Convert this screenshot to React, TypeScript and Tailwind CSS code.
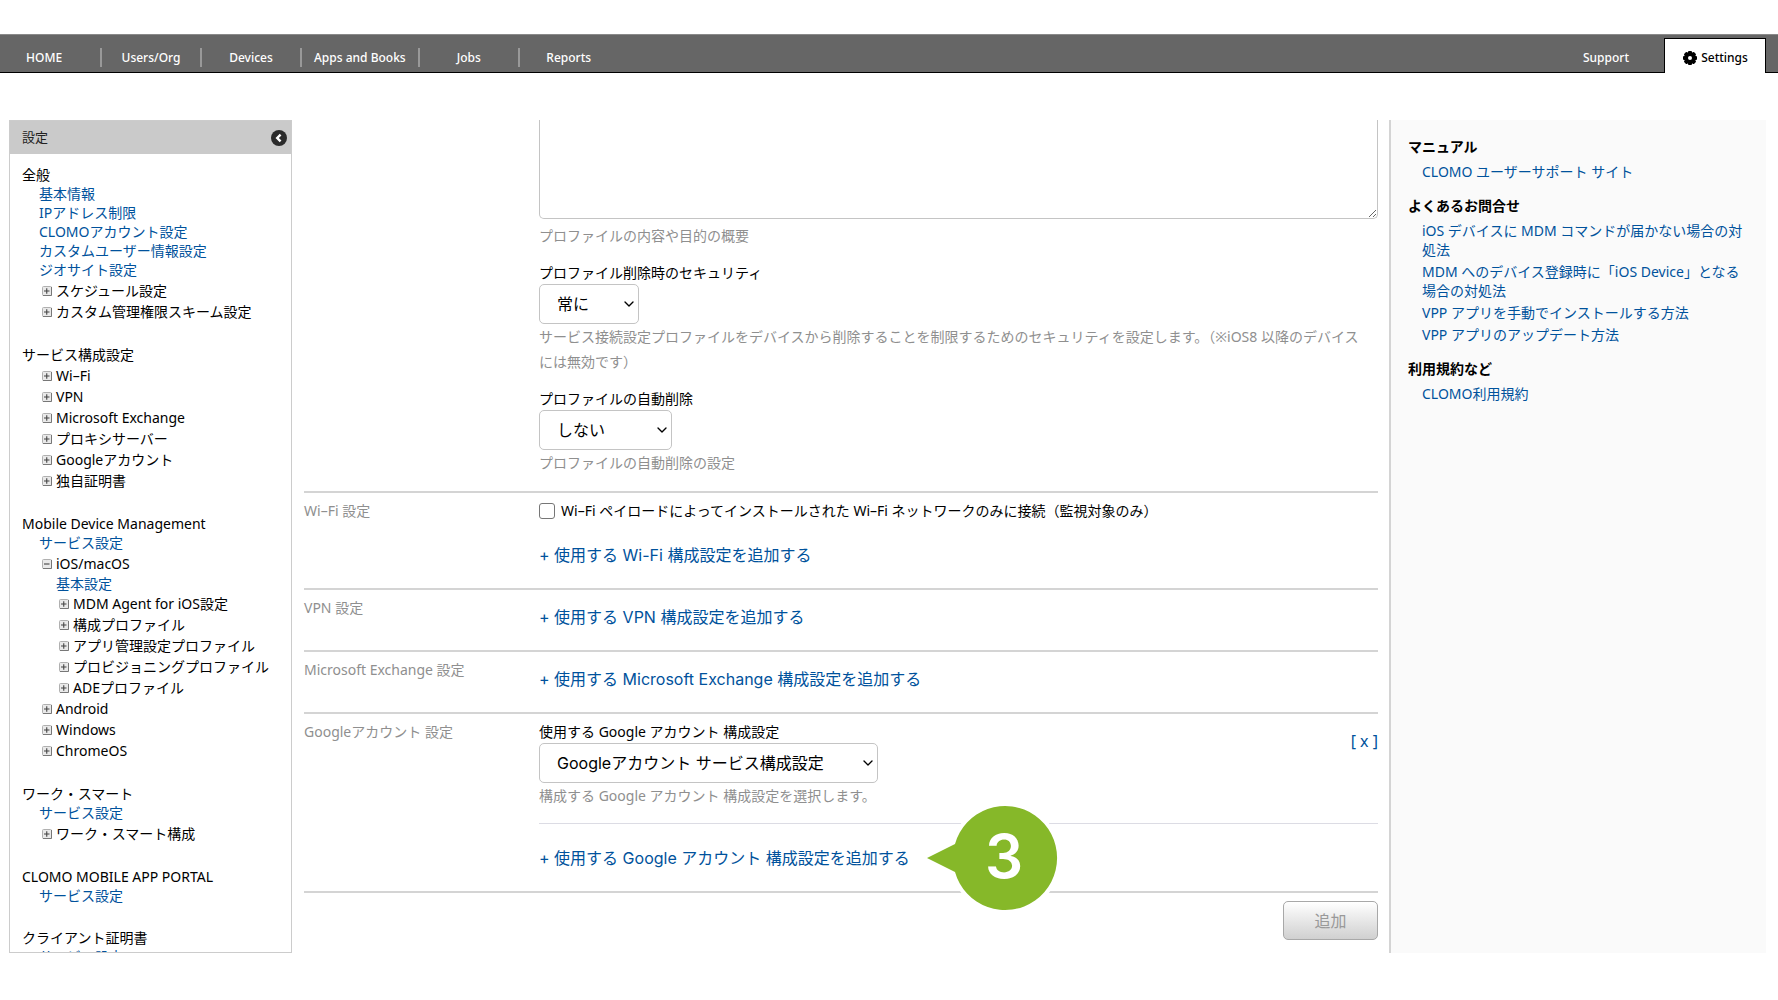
import type { ReactNode } from "react";
import { ChevronDown } from "lucide-react";

type TreeNode = {
  label: string;
  open?: boolean;
  links?: string[];
  children?: TreeNode[];
};

type Section = { title: string; links?: string[]; nodes?: TreeNode[] };

const navItems = ["Users/Org", "Devices", "Apps and Books", "Jobs", "Reports"];

const sections: Section[] = [
  {
    title: "全般",
    links: [
      "基本情報",
      "IPアドレス制限",
      "CLOMOアカウント設定",
      "カスタムユーザー情報設定",
      "ジオサイト設定",
    ],
    nodes: [{ label: "スケジュール設定" }, { label: "カスタム管理権限スキーム設定" }],
  },
  {
    title: "サービス構成設定",
    nodes: [
      { label: "Wi–Fi" },
      { label: "VPN" },
      { label: "Microsoft Exchange" },
      { label: "プロキシサーバー" },
      { label: "Googleアカウント" },
      { label: "独自証明書" },
    ],
  },
  {
    title: "Mobile Device Management",
    links: ["サービス設定"],
    nodes: [
      {
        label: "iOS/macOS",
        open: true,
        links: ["基本設定"],
        children: [
          { label: "MDM Agent for iOS設定" },
          { label: "構成プロファイル" },
          { label: "アプリ管理設定プロファイル" },
          { label: "プロビジョニングプロファイル" },
          { label: "ADEプロファイル" },
        ],
      },
      { label: "Android" },
      { label: "Windows" },
      { label: "ChromeOS" },
    ],
  },
  {
    title: "ワーク・スマート",
    links: ["サービス設定"],
    nodes: [{ label: "ワーク・スマート構成" }],
  },
  { title: "CLOMO MOBILE APP PORTAL", links: ["サービス設定"] },
  { title: "クライアント証明書", links: ["サービス設定"] },
];

const helpSections = [
  { title: "マニュアル", links: ["CLOMO ユーザーサポート サイト"] },
  {
    title: "よくあるお問合せ",
    links: [
      "iOS デバイスに MDM コマンドが届かない場合の対処法",
      "MDM へのデバイス登録時に「iOS Device」となる場合の対処法",
      "VPP アプリを手動でインストールする方法",
      "VPP アプリのアップデート方法",
    ],
  },
  { title: "利用規約など", links: ["CLOMO利用規約"] },
];

const GearIcon = () => (
  <svg viewBox="-8 -8 16 16" className="h-4 w-4">
    {[0, 45, 90, 135].map((angle) => (
      <rect key={angle} x="-2" y="-7" width="4" height="14" rx="1" transform={`rotate(${angle})`} />
    ))}
    <circle r="4" fill="none" stroke="#000" strokeWidth="3.8" />
    <circle r="2" fill="#fff" />
  </svg>
);

const CollapseIcon = () => (
  <svg viewBox="0 0 16 16" className="h-4 w-4">
    <circle cx="8" cy="8" r="8" fill="#2b2b2b" />
    <path d="M9.6 4.6 6.2 8l3.4 3.4" fill="none" stroke="#fff" strokeWidth="2.4" />
  </svg>
);

const ToggleIcon = ({ open }: { open?: boolean }) => (
  <svg viewBox="0 0 10 10" className="h-[10px] w-[10px]">
    <rect x="0.5" y="0.5" width="9" height="9" rx="1" fill="#e9e9e9" stroke="#b0b0b0" />
    <path d="M9.5 1v8.5H1" fill="none" stroke="#777" />
    <path d={open ? "M2 5h5.5" : "M2 5h5.5M4.75 2.2v5.6"} stroke="#444" strokeWidth="1.1" />
  </svg>
);

const Header = () => (
  <header className="flex h-[39px] shrink-0 items-stretch border-t border-b border-t-[#8a8a8a] border-b-black bg-[#666] text-[12px] font-medium text-white">
    <nav className="flex flex-1 items-center">
      <a href="#" className="w-[100px] pt-2 pl-[26px]">
        HOME
      </a>
      {navItems.map((item) => (
        <a
          key={item}
          href="#"
          className="mt-2 min-w-[100px] border-l-2 border-[#999] px-3 text-center leading-[19px]"
        >
          {item}
        </a>
      ))}
    </nav>
    <a href="#" className="flex items-center px-[35px] pt-2">
      Support
    </a>
    <a
      href="#"
      className="mt-[3px] mr-3 -mb-px flex w-[102px] items-center justify-center gap-[3px] border border-b-0 border-black bg-white pt-1 text-black"
    >
      <GearIcon />
      Settings
    </a>
  </header>
);

const SideLinks = ({ links }: { links?: string[] }) => (
  <ul className="pl-[17px]">
    {links?.map((link) => (
      <li key={link}>
        <a href="#" className="text-[#00529c]">
          {link}
        </a>
      </li>
    ))}
  </ul>
);

const Tree = ({ nodes }: { nodes: TreeNode[] }) => (
  <ul>
    {nodes.map((node) => (
      <li key={node.label} className="pl-[17px]">
        <button className="flex h-[21px] items-center gap-1 pl-[3px] whitespace-nowrap">
          <ToggleIcon open={node.open} />
          {node.label}
        </button>
        <SideLinks links={node.links} />
        {node.children && <Tree nodes={node.children} />}
      </li>
    ))}
  </ul>
);

const Sidebar = () => (
  <aside className="flex w-[283px] shrink-0 flex-col overflow-hidden border border-[#ccc]">
    <div className="flex h-[33px] shrink-0 items-center justify-between bg-[#cacaca] pr-1 pl-3 text-[13px] text-[#222]">
      設定
      <button aria-label="collapse">
        <CollapseIcon />
      </button>
    </div>
    <div className="flex flex-col gap-[23px] pt-[11px] pl-3 leading-[19px]">
      {sections.map((section) => (
        <section key={section.title}>
          <h2>{section.title}</h2>
          <SideLinks links={section.links} />
          {section.nodes && (
            <div className="pt-px">
              <Tree nodes={section.nodes} />
            </div>
          )}
        </section>
      ))}
    </div>
  </aside>
);

const Row = ({ title, children }: { title?: string; children: ReactNode }) => (
  <div className="flex border-b-2 border-[#d4d4d4]">
    <div className="w-[235px] shrink-0 pt-[7px] leading-[21px] text-[#8f8f8f]">{title}</div>
    <div className="min-w-0 flex-1">{children}</div>
  </div>
);

const AddLink = ({ children }: { children: ReactNode }) => (
  <a
    href="#"
    className="font-[Inter,'Noto_Sans_CJK_JP',sans-serif] text-[16px] leading-6 text-[#00529c]"
  >
    + {children}
  </a>
);

type FieldProps = { id: string; label: string; value: string; help: string; width: string };

const SelectField = ({ id, label, value, help, width }: FieldProps) => (
  <div>
    <label htmlFor={id} className="block leading-[22px]">
      {label}
    </label>
    <div className={`relative ${width}`}>
      <select
        id={id}
        className="block h-10 w-full appearance-none rounded-[5px] border border-[#c4c4c4] bg-white pl-[17px] font-[Inter,'Noto_Sans_CJK_JP',sans-serif] text-[16px]"
      >
        <option>{value}</option>
      </select>
      <ChevronDown
        strokeWidth={2}
        className="pointer-events-none absolute top-3 right-[2px] h-4 w-4"
      />
    </div>
    <p className="pr-2 leading-[25px] text-[#8f8f8f]">{help}</p>
  </div>
);

// numbered callout pointing at the link on its left
const StepBadge = () => (
  <svg
    viewBox="0 0 140 112"
    className="absolute top-1/2 left-full ml-[12px] h-[112px] w-[140px] -translate-y-1/2"
  >
    <path
      d="M5 56 33 42A52 52 0 1 1 33 70Z"
      fill="#86b829"
      stroke="#fff"
      strokeWidth="8"
      paintOrder="stroke"
    />
    <text
      x="82"
      y="76"
      textAnchor="middle"
      fill="#fff"
      className="font-[Inter,sans-serif] text-[60px] font-semibold"
    >
      3
    </text>
  </svg>
);

const ProfileForm = () => (
  <form className="min-w-0 flex-1 pr-[11px] pl-3">
    <Row>
      <textarea
        aria-label="プロファイルの内容や目的の概要"
        className="block h-[99px] w-full resize rounded-b-[5px] border border-t-0 border-[#c4c4c4]"
      />
      <p className="pt-1 leading-[25px] text-[#8f8f8f]">プロファイルの内容や目的の概要</p>
      <div className="flex flex-col gap-[14px] pt-[14px] pb-4">
        <SelectField
          id="security"
          label="プロファイル削除時のセキュリティ"
          value="常に"
          help="サービス接続設定プロファイルをデバイスから削除することを制限するためのセキュリティを設定します。（※iOS8 以降のデバイスには無効です）"
          width="w-[100px]"
        />
        <SelectField
          id="auto-remove"
          label="プロファイルの自動削除"
          value="しない"
          help="プロファイルの自動削除の設定"
          width="w-[133px]"
        />
      </div>
    </Row>
    <Row title="Wi–Fi 設定">
      <label className="flex items-center gap-[6px] pt-[7px] leading-[21px]">
        <input
          type="checkbox"
          className="h-4 w-4 appearance-none rounded-[3px] border border-[#767676] bg-white"
        />
        Wi–Fi ペイロードによってインストールされた Wi–Fi ネットワークのみに接続（監視対象のみ）
      </label>
      <div className="pt-[22px] pb-[21px]">
        <AddLink>使用する Wi-Fi 構成設定を追加する</AddLink>
      </div>
    </Row>
    <Row title="VPN 設定">
      <div className="pt-[15px] pb-[21px]">
        <AddLink>使用する VPN 構成設定を追加する</AddLink>
      </div>
    </Row>
    <Row title="Microsoft Exchange 設定">
      <div className="pt-[15px] pb-[21px]">
        <AddLink>使用する Microsoft Exchange 構成設定を追加する</AddLink>
      </div>
    </Row>
    <Row title="Googleアカウント 設定">
      <div className="flex items-start justify-between border-b border-[#dcdce4] pt-[7px] pb-[15px]">
        <SelectField
          id="google"
          label="使用する Google アカウント 構成設定"
          value="Googleアカウント サービス構成設定"
          help="構成する Google アカウント 構成設定を選択します。"
          width="w-[339px]"
        />
        <button className="mt-2 text-[16px] leading-6 text-[#00529c]">[ x ]</button>
      </div>
      <div className="pt-[22px] pb-[21px]">
        <span className="relative inline-block">
          <AddLink>使用する Google アカウント 構成設定を追加する</AddLink>
          <StepBadge />
        </span>
      </div>
    </Row>
    <div className="flex justify-end pt-2">
      <button className="h-[39px] w-[95px] rounded-[5px] border border-[#a8a8a8] bg-linear-to-b from-white to-[#d0d0d0] text-[16px] text-[#999]">
        追加
      </button>
    </div>
  </form>
);

const HelpPanel = () => (
  <aside className="flex w-[377px] shrink-0 flex-col gap-[15px] border-l-2 border-[#d4d4d4] bg-[#fafafa] px-[17px] pt-[17px] leading-[19px]">
    {helpSections.map((section) => (
      <section key={section.title}>
        <h2 className="pb-[6px] font-bold">{section.title}</h2>
        <ul className="flex flex-col gap-[3px] pl-[14px]">
          {section.links.map((link) => (
            <li key={link}>
              <a href="#" className="text-[#00529c]">
                {link}
              </a>
            </li>
          ))}
        </ul>
      </section>
    ))}
  </aside>
);

export default function App() {
  return (
    <div className="flex h-screen flex-col bg-white pt-[34px] pb-[47px] font-['Noto_Sans','Noto_Sans_CJK_JP',sans-serif] text-[14px] text-black">
      <Header />
      <main className="flex min-h-0 flex-1 pt-[47px] pr-3 pl-[9px]">
        <Sidebar />
        <ProfileForm />
        <HelpPanel />
      </main>
    </div>
  );
}
